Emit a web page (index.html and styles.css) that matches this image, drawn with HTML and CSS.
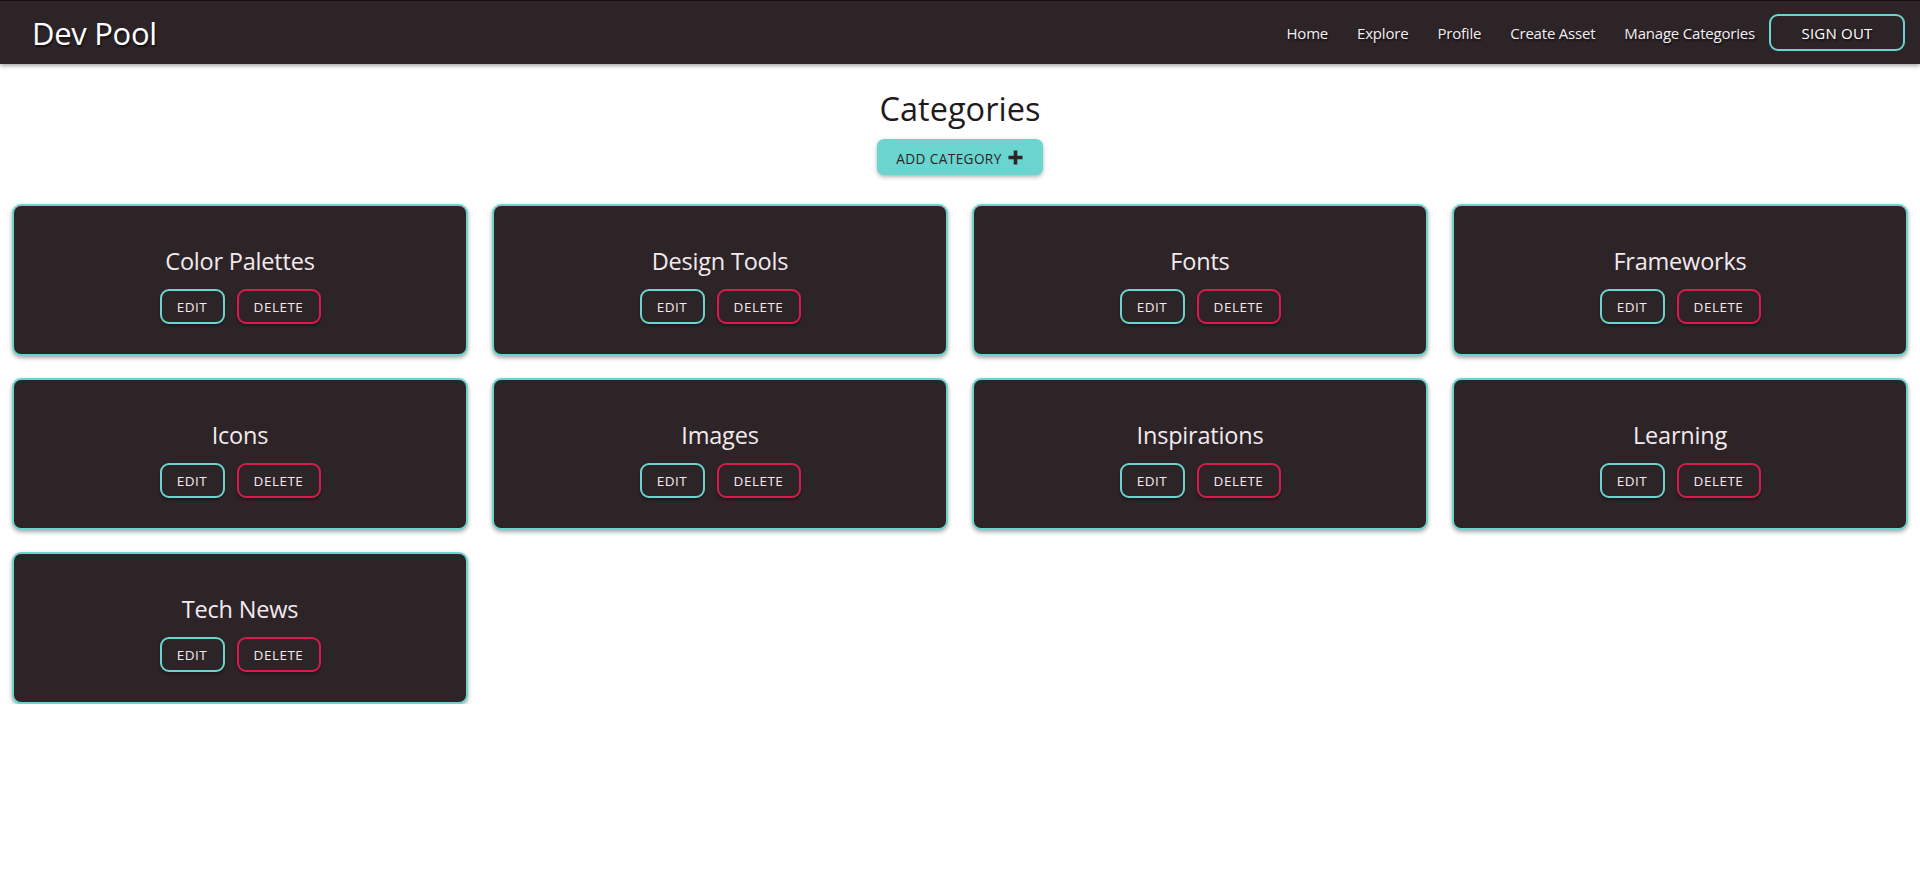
FILE: index.html
```html
<!DOCTYPE html>
<html lang="en">
<head>
<meta charset="utf-8">
<title>Dev Pool - Categories</title>
<link rel="stylesheet" href="styles.css">
</head>
<body>
<header class="navbar">
  <div class="brand">Dev Pool</div>
  <nav class="nav-links">
    <a class="nav-link" href="#">Home</a>
    <a class="nav-link" href="#">Explore</a>
    <a class="nav-link" href="#">Profile</a>
    <a class="nav-link" href="#">Create Asset</a>
    <a class="nav-link" href="#">Manage Categories</a>
    <button class="signout">SIGN OUT</button>
  </nav>
</header>
<main class="page">
  <h1 class="page-title">Categories</h1>
  <button class="add-btn">ADD CATEGORY
    <svg class="plus" width="17" height="17" viewBox="0 0 17 17"><path d="M8.5 1.5v14M1.5 8.5h14" stroke="#2d2428" stroke-width="3.6" stroke-linecap="butt"/></svg>
  </button>
  <section class="grid">
    <div class="card"><h2 class="card-title">Color Palettes</h2><div class="actions"><button class="btn edit">EDIT</button><button class="btn delete">DELETE</button></div></div>
    <div class="card"><h2 class="card-title">Design Tools</h2><div class="actions"><button class="btn edit">EDIT</button><button class="btn delete">DELETE</button></div></div>
    <div class="card"><h2 class="card-title">Fonts</h2><div class="actions"><button class="btn edit">EDIT</button><button class="btn delete">DELETE</button></div></div>
    <div class="card"><h2 class="card-title">Frameworks</h2><div class="actions"><button class="btn edit">EDIT</button><button class="btn delete">DELETE</button></div></div>
    <div class="card"><h2 class="card-title">Icons</h2><div class="actions"><button class="btn edit">EDIT</button><button class="btn delete">DELETE</button></div></div>
    <div class="card"><h2 class="card-title">Images</h2><div class="actions"><button class="btn edit">EDIT</button><button class="btn delete">DELETE</button></div></div>
    <div class="card"><h2 class="card-title">Inspirations</h2><div class="actions"><button class="btn edit">EDIT</button><button class="btn delete">DELETE</button></div></div>
    <div class="card"><h2 class="card-title">Learning</h2><div class="actions"><button class="btn edit">EDIT</button><button class="btn delete">DELETE</button></div></div>
    <div class="card"><h2 class="card-title">Tech News</h2><div class="actions"><button class="btn edit">EDIT</button><button class="btn delete">DELETE</button></div></div>
  </section>
</main>
</body>
</html>
```
FILE: styles.css
```css
* { box-sizing: border-box; }

body {
  margin: 0;
  background: #ffffff;
  font-family: "Open Sans", "Noto Sans", sans-serif;
  color: #1f1a1c;
}

.navbar {
  height: 64px;
  background: #2d2428;
  border-top: 1px solid #141012;
  display: flex;
  align-items: center;
  justify-content: space-between;
  padding: 0 15px 0 32px;
  box-shadow: 0 2px 4px rgba(0, 0, 0, 0.35);
}

.brand {
  color: #ffffff;
  font-size: 31px;
  letter-spacing: -0.3px;
  text-shadow: 1px 2px 2px rgba(0, 0, 0, 0.6);
}

.nav-links {
  display: flex;
  align-items: center;
  gap: 29px;
}

.nav-link {
  color: #f2eef0;
  text-decoration: none;
  font-size: 15px;
  letter-spacing: -0.2px;
  text-shadow: 1px 2px 2px rgba(0, 0, 0, 0.6);
}

.signout {
  margin-left: -15px;
  width: 136px;
  height: 37px;
  background: transparent;
  border: 2px solid #6ad4cf;
  border-radius: 9px;
  color: #ffffff;
  font-family: inherit;
  font-size: 15px;
  letter-spacing: 0.2px;
  text-shadow: 1px 2px 2px rgba(0, 0, 0, 0.6);
}

.page {
  display: flex;
  flex-direction: column;
  align-items: center;
  padding-top: 24px;
}

.page-title {
  margin: 0;
  font-size: 32.5px;
  font-weight: 400;
  line-height: 42px;
  color: #1f1a1c;
}

.add-btn {
  margin-top: 9px;
  height: 36px;
  width: 166px;
  display: flex;
  align-items: center;
  justify-content: center;
  gap: 5px;
  padding: 3px 0 0;
  background: #6ad4cf;
  border: none;
  border-radius: 7px;
  box-shadow: 0 2px 4px rgba(0, 0, 0, 0.3);
  color: #2d2428;
  font-family: inherit;
  font-size: 13.6px;
  letter-spacing: 0.4px;
}

.plus { margin-top: -3px; }

.grid {
  align-self: stretch;
  margin-top: 29px;
  padding: 0 12px;
  display: grid;
  grid-template-columns: repeat(4, 1fr);
  column-gap: 24px;
  row-gap: 22px;
}

.card {
  height: 152px;
  background: #2d2428;
  border: 2px solid #6ad4cf;
  border-radius: 9px;
  box-shadow: 0 2px 4px rgba(0, 0, 0, 0.35);
  display: flex;
  flex-direction: column;
  align-items: center;
  justify-content: center;
  padding-top: 8px;
}

.card-title {
  margin: 0 0 12px;
  font-size: 23.5px;
  font-weight: 400;
  line-height: 32px;
  color: #f3eaee;
  letter-spacing: -0.2px;
}

.actions {
  display: flex;
  gap: 12px;
}

.btn {
  height: 35px;
  padding: 2px 0 0;
  background: transparent;
  border: 2px solid;
  border-radius: 9px;
  font-family: inherit;
  font-size: 13.5px;
  letter-spacing: 0.5px;
  color: #f3eaee;
  box-shadow: 0 2px 3px rgba(0, 0, 0, 0.35);
}

.edit { width: 65px; border-color: #6ad4cf; }
.delete { width: 84px; border-color: #d81b4c; }
```
